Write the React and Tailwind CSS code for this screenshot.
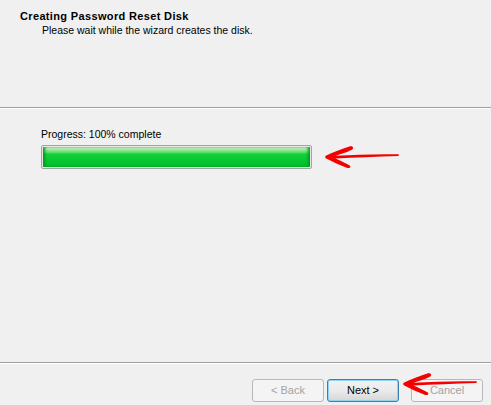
import React from 'react'

// Red hand-drawn arrow overlay, pointing left
const RedArrow = ({ className }) => (
    <svg className={className} viewBox="0 0 80 24" fill="#f40000">
        <path d="M0 11 C8 7 18 3 28 0 C31 1 31 3 29 4 C23 7 16 9 11 10.5 C32 9.5 55 8.5 80 9 L80 11 C55 12 32 12.5 11 13.5 C17 16 23 19 27 21.5 C28 23 27 24 24 24 C16 21 8 17 0 13 Z" />
    </svg>
)

const WizardButton = ({ children, variant = 'normal' }) => {
    const styles = {
        disabled: 'border-[#b5b9bd] text-[#a3a3a3] bg-[#f4f4f4]',
        focused: 'border-[#3c7fb1] text-black bg-gradient-to-b from-[#f2f2f2] via-[#ebebeb] to-[#d6d6d6] shadow-[inset_0_0_0_1px_#8fd3f5]',
        normal: 'border-[#707070] text-black bg-gradient-to-b from-[#f2f2f2] to-[#d6d6d6]',
    }
    return (
        <div className={`w-[72px] h-[23px] rounded-[3px] border flex items-center justify-center text-[11px] ${styles[variant]}`}>
            {children}
        </div>
    )
}

export default function App() {
    return (
        <div className="w-[491px] h-[405px] bg-[#f0f0f0] flex flex-col overflow-hidden relative" style={{ fontFamily: '"Liberation Sans", Arial, sans-serif' }}>
            {/* Header */}
            <div className="h-[107px] pl-[20px] pt-[10px]">
                <div className="text-[11px] font-bold text-black leading-[13px] tracking-[0.35px]">Creating Password Reset Disk</div>
                <div className="text-[10.5px] text-black leading-[14px] pl-[22px]">Please wait while the wizard creates the disk.</div>
            </div>
            <div className="h-px bg-[#a0a0a0]" />
            <div className="h-px bg-white" />

            {/* Body */}
            <div className="flex-1 pl-[41px] pt-[18px]">
                <div className="text-[10.5px] text-black leading-[14px]">Progress: 100% complete</div>
                <div className="flex items-center mt-[4px]">
                    <div className="w-[271px] h-[24px] border border-[#9fa59f] rounded-[2px] p-px bg-[#e6e6e6]">
                        <div className="h-full w-full rounded-[1px] bg-gradient-to-b from-[#d2f6d2] via-[#11d13a] via-[35%] to-[#02bb29] shadow-[inset_3px_0_3px_-1px_#019a20,inset_-3px_0_3px_-1px_#019a20]" />
                    </div>
                    <RedArrow className="ml-[10px] w-[80px] h-[22px]" />
                </div>
            </div>

            {/* Footer */}
            <div className="h-px bg-[#a0a0a0]" />
            <div className="h-px bg-white" />
            <div className="h-[41px] flex items-start justify-end gap-[3px] pr-[8px] pt-[15px]">
                <WizardButton variant="disabled">&lt; Back</WizardButton>
                <WizardButton variant="focused">Next &gt;</WizardButton>
                <div className="ml-[9px]">
                    <WizardButton variant="disabled">Cancel</WizardButton>
                </div>
            </div>
            <RedArrow className="absolute left-[400px] top-[373px] w-[80px] h-[22px]" />
        </div>
    )
}
